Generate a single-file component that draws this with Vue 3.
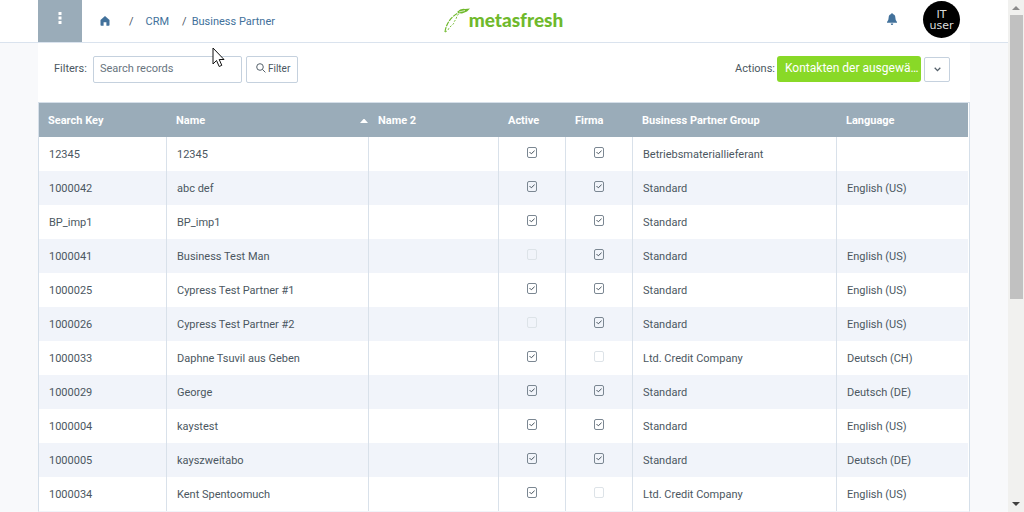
<script setup>
import { ref } from 'vue'

const columns = [
  { key: 'search', title: 'Search Key' },
  { key: 'name', title: 'Name', sorted: true },
  { key: 'name2', title: 'Name 2' },
  { key: 'active', title: 'Active', check: true },
  { key: 'firma', title: 'Firma', check: true },
  { key: 'group', title: 'Business Partner Group' },
  { key: 'language', title: 'Language' },
]

const row = (search, name, active, firma, group, language) =>
  ({ search, name, name2: '', active, firma, group, language })

const rows = ref([
  row('12345', '12345', true, true, 'Betriebsmateriallieferant', ''),
  row('1000042', 'abc def', true, true, 'Standard', 'English (US)'),
  row('BP_imp1', 'BP_imp1', true, true, 'Standard', ''),
  row('1000041', 'Business Test Man', false, true, 'Standard', 'English (US)'),
  row('1000025', 'Cypress Test Partner #1', true, true, 'Standard', 'English (US)'),
  row('1000026', 'Cypress Test Partner #2', false, true, 'Standard', 'English (US)'),
  row('1000033', 'Daphne Tsuvil aus Geben', true, false, 'Ltd. Credit Company', 'Deutsch (CH)'),
  row('1000029', 'George', true, true, 'Standard', 'Deutsch (DE)'),
  row('1000004', 'kaystest', true, true, 'Standard', 'English (US)'),
  row('1000005', 'kayszweitabo', true, true, 'Standard', 'Deutsch (DE)'),
  row('1000034', 'Kent Spentoomuch', true, false, 'Ltd. Credit Company', 'English (US)'),
])
const query = ref('')
</script>

<template>
  <div class="window">
    <div class="page">
      <header class="topbar">
        <div class="side">
          <button class="menu" aria-label="Menu">
            <svg width="4" height="12" viewBox="0 0 4 12" fill="#fff"><path d="M.5 0h3v3h-3zM.5 4.500h3v3h-3zM.5 9h3v3h-3z" /></svg>
          </button>
          <nav class="crumbs" aria-label="Breadcrumb">
            <a href="#" class="home" aria-label="Home">
              <svg width="10" height="10" viewBox="0 0 10 10" fill="#42719b"><path d="M5 0 9.500 4V9q0 .8-.8.8H6.400V6.200H3.600v3.600H1.300Q.5 9.800.5 9V4z" /></svg>
            </a>
            <span class="slash first">/</span>
            <a href="#" class="crm">CRM</a>
            <span class="slash">/</span>
            <a href="#">Business Partner</a>
          </nav>
        </div>
        <a href="#" class="logo">
          <svg width="26" height="26" viewBox="0 0 26 26" fill="none" stroke="#6fb92c">
            <path d="M1 24C2 16 7 8 16 4" stroke-width="1.200" stroke-dasharray="5 1" />
            <path d="M1 24q3-1 4-4l2-2q3-2 3-4l2-3 1-3 3-4" stroke-width=".9" stroke-dasharray="2 1.500" />
            <path d="M13 4q4-4 8-3l5-.5-3 3-5 2q-3 0-5-1.500z" fill="#6fb92c" stroke="none" />
            <path d="m15 4 6-1.500" stroke="#fff" stroke-width=".7" />
          </svg>
          <span>metasfresh</span>
        </a>
        <div class="side user">
          <button class="bell" aria-label="Notifications">
            <svg width="10" height="12" viewBox="0 0 10 12" fill="#42719b"><path d="M4.300 1q0-1 .7-1t.7 1Q8.400 1.500 8.400 5q0 2.700 1.600 4v.8H0V9q1.600-1.300 1.600-4Q1.600 1.500 4.300 1zM3.700 10.400h2.600Q6.200 12 5 12T3.700 10.400z" /></svg>
          </button>
          <button class="avatar">IT<br />user</button>
        </div>
      </header>

      <main class="content">
        <div class="toolbar">
          <div class="group">
            <label for="search">Filters:</label>
            <input id="search" v-model="query" class="search" type="text" placeholder="Search records" />
            <button class="filter">
              <svg width="10" height="10" viewBox="0 0 10 10" fill="none" stroke="#55616b"><circle cx="4" cy="4" r="3.300" /><path d="m6.400 6.400 3 3" /></svg>
              <span>Filter</span>
            </button>
          </div>
          <div class="group">
            <span>Actions:</span>
            <button class="action">Kontakten der ausgewä…</button>
            <button class="more" aria-label="More actions">
              <svg width="7" height="5" viewBox="0 0 7 5" fill="none" stroke="#55616b" stroke-width="1.300"><path d="m.7.8 2.800 2.800L6.300.8" /></svg>
            </button>
          </div>
        </div>

        <div class="panel">
          <table>
            <colgroup><col v-for="c in columns" :key="c.key" :class="'col-' + c.key" /></colgroup>
            <thead>
              <tr>
                <th v-for="c in columns" :key="c.key" scope="col">
                  <span class="heading">{{ c.title }}
                    <svg v-if="c.sorted" width="8" height="4" viewBox="0 0 8 4" fill="#fff"><path d="M0 4 3.500 0h1L8 4z" /></svg>
                  </span>
                </th>
              </tr>
            </thead>
            <tbody>
              <tr v-for="r in rows" :key="r.search">
                <td v-for="c in columns" :key="c.key" :class="{ tick: c.check }">
                  <label v-if="c.check" class="box">
                    <input v-model="r[c.key]" type="checkbox" :aria-label="c.title + ' ' + r.name" />
                    <svg v-if="r[c.key]" width="6" height="5" viewBox="0 0 6 5" fill="none" stroke="#46525c"><path d="M.5 2 2.300 3.800 5.600.7" /></svg>
                  </label>
                  <template v-else>{{ r[c.key] }}</template>
                </td>
              </tr>
            </tbody>
          </table>
        </div>
      </main>
    </div>

    <div class="scrollbar">
      <svg width="8" height="4" viewBox="0 0 8 4" fill="#8b8b8b"><path d="M0 4 4 0l4 4z" /></svg>
      <div class="track"><div class="thumb"></div></div>
      <svg width="8" height="4" viewBox="0 0 8 4" fill="#404040"><path d="M0 0h8L4 4z" /></svg>
    </div>

    <svg class="pointer" width="14" height="21" viewBox="0 0 14 21" fill="#fff" stroke="#111"><path d="M1 1v16l3.500-3.500 2.700 6 2.600-1.200-2.600-5.800H12z" /></svg>
  </div>
</template>

<style>
body {
  background: #f8f9fb;
}
</style>

<style scoped>
* {
  box-sizing: border-box;
}
.window {
  position: relative;
  display: flex;
  height: 100vh;
  overflow: hidden;
  font: 11px/16px Roboto, "Liberation Sans", sans-serif;
  color: #4b5761;
}
button,
input {
  font: inherit;
  color: inherit;
  margin: 0;
}
button {
  border: 0;
  padding: 0;
  background: none;
}
a {
  color: #42719b;
  text-decoration: none;
}
svg {
  display: block;
  flex: none;
}
.page {
  flex: 1;
  min-width: 0;
  overflow: hidden;
}
.topbar {
  display: flex;
  height: 43px;
  padding: 0 48px 0 38px;
  background: #fff;
  border-bottom: 1px solid #dae3ee;
}
.side {
  flex: 1;
  display: flex;
}
.menu {
  width: 44px;
  display: flex;
  justify-content: center;
  padding-top: 12px;
  background: #9aacb9;
}
.crumbs {
  display: flex;
  align-items: center;
  padding-left: 18px;
}
.slash {
  margin: 0 5px 0 13px;
}
.slash.first {
  margin: 0 12px 0 19px;
}
.crumbs > :not(.home) {
  padding-top: 2px;
}
.logo {
  display: flex;
  align-items: center;
  padding-left: 9px;
  color: #6fb92c;
  font: 900 19px/24px Lato, sans-serif;
}
.logo svg {
  margin-right: -1px;
}
.logo span {
  padding-bottom: 2px;
}
.user {
  justify-content: flex-end;
  align-items: center;
  gap: 26px;
}
.bell {
  padding-bottom: 4px;
}
.avatar {
  width: 37px;
  height: 37px;
  margin-bottom: 4px;
  padding-top: 2px;
  border-radius: 50%;
  background: #000;
  color: #ddd;
  font: 11px/11px "DejaVu Sans", sans-serif;
}
.content {
  margin: 0 38px;
  background: #fff;
}
.toolbar {
  display: flex;
  justify-content: space-between;
  padding: 12px 20px 19px 16px;
}
.group {
  display: flex;
  align-items: center;
  height: 28px;
}
.search {
  width: 149px;
  height: 27px;
  margin: 0 4px 0 6px;
  padding: 0 6px 2px;
  border: 1px solid #c5d1de;
  border-radius: 2px;
  background: #fff;
}
.search::placeholder {
  color: #68747e;
}
.filter {
  display: flex;
  align-items: center;
  gap: 2px;
  width: 52px;
  height: 27px;
  padding: 0 0 2px 9px;
  border: 1px solid #c5d1de;
  border-radius: 2px;
  font-size: 10px;
}
.filter span {
  padding-top: 2px;
}
.action {
  width: 144px;
  height: 26px;
  margin: 0 3px 0 2px;
  padding: 0 0 2px 8px;
  border-radius: 3px;
  background: #89d927;
  color: #fff;
  font-size: 12px;
  font-weight: 400;
  text-align: left;
  white-space: nowrap;
}
.more {
  display: flex;
  align-items: center;
  justify-content: center;
  width: 26px;
  height: 25px;
  border: 1px solid #c5d1de;
  border-radius: 2px;
}
.panel {
  border: 1px solid #d5dfe9;
  border-bottom-color: #f1f4fa;
  padding-right: 1px;
}
table {
  width: 100%;
  table-layout: fixed;
  border-collapse: separate;
  border-spacing: 0;
}
.col-search {
  width: 128px;
}
.col-name {
  width: 202px;
}
.col-name2 {
  width: 130px;
}
.col-active,
.col-firma {
  width: 67px;
}
.col-group {
  width: 204px;
}
th,
td {
  height: 34px;
  text-align: left;
}
th {
  padding: 2px 0 0 9px;
  background: #9aacb9;
  color: #fff;
  font-weight: 700;
}
.heading {
  display: flex;
  align-items: center;
  justify-content: space-between;
  padding-right: 1px;
}
td {
  padding: 2px 0 0 10px;
  border-right: 1px solid #d9e1ea;
}
td:last-child {
  border-right: 0;
}
tbody tr:nth-child(even) {
  background: #f1f4fa;
}
.tick {
  padding: 0 0 3px;
}
.box {
  display: grid;
  place-items: center;
}
.box > * {
  grid-area: 1 / 1;
}
.box input {
  appearance: none;
  width: 10px;
  height: 11px;
  border: 1px solid #dde3e8;
  border-radius: 2px;
}
.box input:checked {
  border-color: #7b8792;
}
.scrollbar {
  display: flex;
  flex-direction: column;
  align-items: center;
  width: 16px;
  padding: 6px 0;
  background: #f1f1ef;
}
.track {
  flex: 1;
  width: 100%;
  padding: 5px 1px 5px 2px;
}
.thumb {
  height: 59%;
  background: #c1c1c1;
}
.pointer {
  position: absolute;
  left: 212px;
  top: 47px;
}
</style>
